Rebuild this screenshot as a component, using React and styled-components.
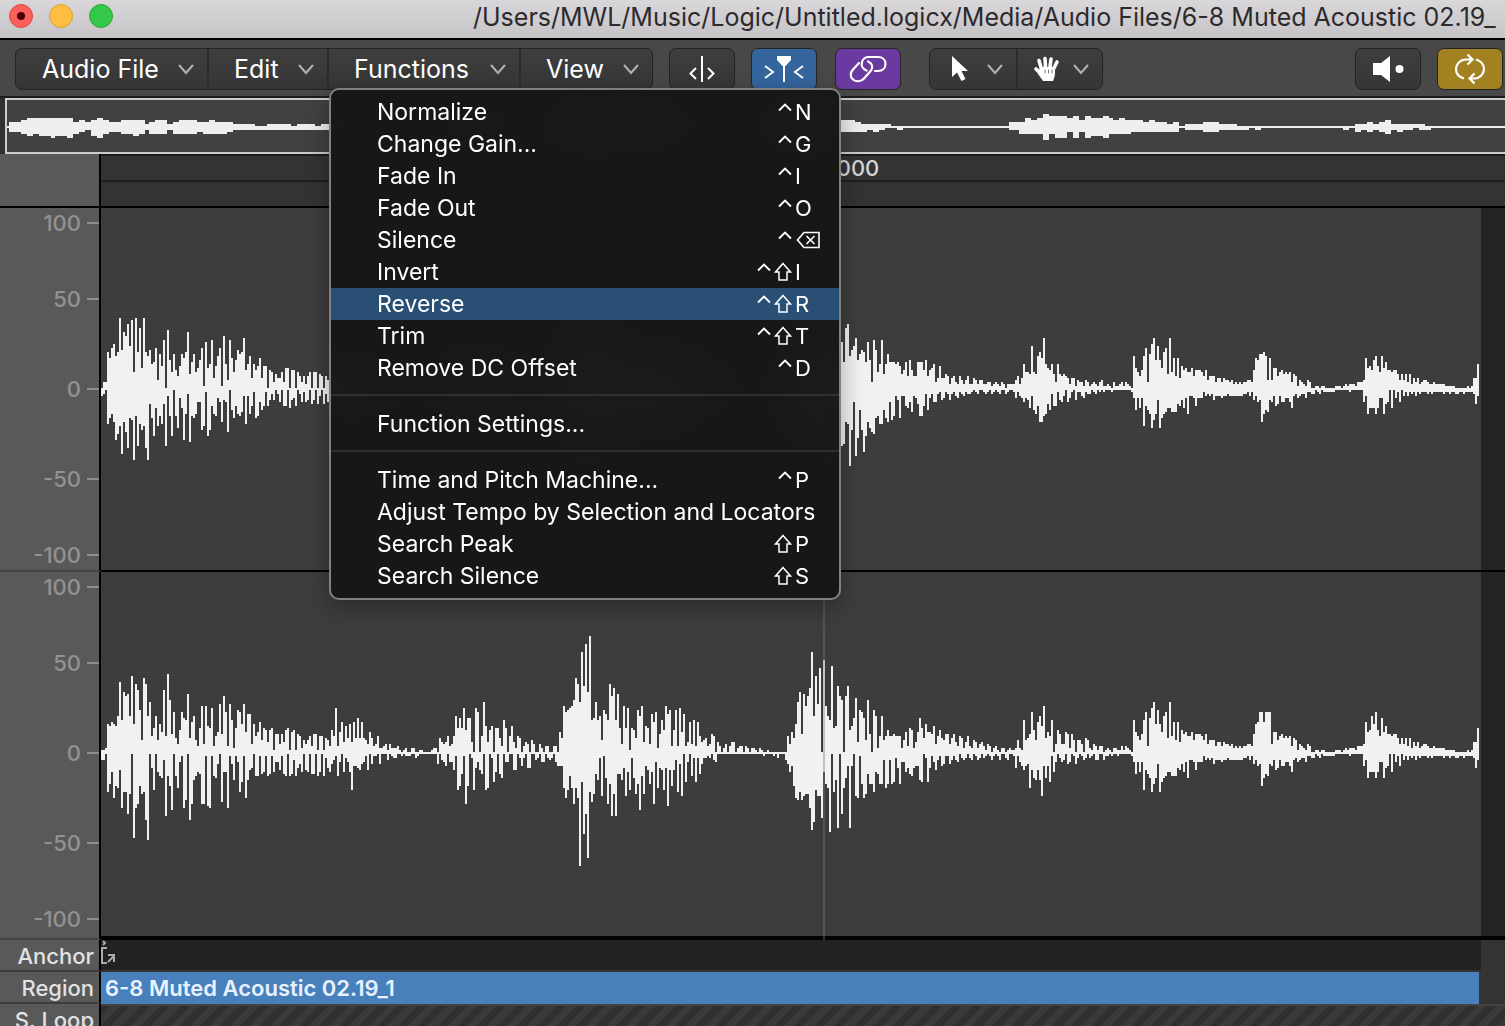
import React from "react"
import styled, { createGlobalStyle, css } from "styled-components"

const GlobalStyle = createGlobalStyle`
    * {
        box-sizing: border-box;
    }
    body {
        margin: 0;
        background: #333;
        font-family: Inter, "Liberation Sans", sans-serif;
    }
    button {
        font-family: inherit;
        border: none;
        margin: 0;
        padding: 0;
        color: inherit;
        background: none;
    }
`

/* peaks are stored in steps of 2px, one entry per 2px column */

const LEFT_UP = [
    0,3,3,18,15,20,22,16,18,35,19,28,26,32,21,34,8,35,18,30,10,35,18,16,19,12,13,20,4,17,
    11,24,0,29,14,8,17,9,6,11,17,15,18,28,7,13,17,8,10,14,20,1,23,10,12,24,5,11,16,20,
    1,26,12,4,24,15,8,14,19,17,18,25,9,12,16,5,12,9,11,15,5,11,11,0,9,8,3,7,5,5,
    8,3,10,10,0,9,9,0,8,6,3,6,2,6,8,0,8,8,0,7,6,0,6,4,6,
]
const LEFT_DOWN = [
    3,2,0,17,14,12,16,25,22,18,32,16,21,29,14,15,35,13,28,17,20,18,29,35,7,14,23,9,18,13,
    17,7,28,3,13,23,0,13,19,4,9,25,12,2,26,13,14,12,6,6,20,18,1,23,20,8,12,13,4,6,
    16,5,6,21,0,10,14,8,12,13,11,3,17,3,12,8,1,14,13,6,10,8,1,8,5,2,5,0,2,6,
    0,8,8,0,9,5,4,8,0,2,6,1,6,5,0,7,5,0,7,3,0,7,2,6,6,
]
const LEFT_TAIL_UP = [
    23,13,30,32,16,19,21,25,14,17,19,18,13,23,14,3,24,19,8,12,24,7,12,17,13,13,13,12,13,11,
    7,9,13,6,14,9,6,6,13,13,13,9,14,6,9,10,12,3,5,11,5,5,7,6,2,5,6,3,2,6,
    4,2,4,6,2,2,5,4,2,4,4,2,2,3,3,1,2,3,2,1,3,2,0,2,2,2,2,4,6,2,
    5,12,8,8,7,21,8,7,16,18,15,25,12,10,9,12,7,3,12,7,6,7,6,5,2,5,5,1,4,3,
    3,1,4,3,1,2,3,2,1,3,4,1,1,2,1,0,3,1,1,2,
]
const LEFT_TAIL_DOWN = [
    28,27,16,17,38,20,6,33,24,10,20,31,23,16,19,21,22,14,13,17,17,10,14,16,6,15,13,3,5,14,
    3,3,8,9,6,11,3,4,7,13,13,8,2,10,4,2,6,6,2,1,5,4,1,2,5,2,1,3,4,1,
    2,3,1,2,2,1,0,1,2,0,0,1,2,1,0,2,1,0,1,2,0,0,2,1,0,0,1,4,1,3,
    4,6,4,5,9,3,10,12,8,16,16,13,12,7,10,2,8,8,1,5,6,3,0,6,4,1,0,5,1,1,
    3,4,1,2,2,0,1,2,0,1,0,1,0,0,0,1,0,0,0,0,
]

const RIGHT_UP = [
    1,1,2,14,13,15,14,13,18,35,16,30,28,29,18,38,14,34,31,21,6,37,34,18,25,8,12,18,6,14,
    10,31,8,39,26,9,20,7,4,11,20,17,16,29,7,15,18,6,3,12,23,4,23,13,12,22,3,8,10,24,
    9,28,20,3,24,16,2,12,21,20,14,24,10,19,19,4,14,8,10,15,6,12,11,5,11,12,1,9,9,4,
    9,5,11,12,1,10,11,1,9,8,2,6,4,6,8,3,9,9,1,8,8,1,7,6,3,11,8,22,3,10,
    15,5,13,7,14,5,15,7,17,7,15,7,6,4,10,7,3,4,8,2,2,3,4,1,4,2,2,2,3,1,
    0,1,2,0,0,2,2,0,0,1,1,0,0,0,0,1,2,2,0,7,5,4,
    5,8,3,4,8,18,12,17,12,22,11,17,17,5,0,22,20,0,8,25,13,5,11,13,0,12,12,7,3,16,
    12,0,8,13,5,2,8,7,0,3,5,4,0,6,4,0,0,4,2,0,3,3,0,0,3,3,0,10,7,23,
    20,21,22,23,26,37,34,25,50,33,54,30,58,16,17,25,16,18,6,21,19,16,34,28,32,16,29,12,4,23,
    12,22,1,12,11,7,21,18,23,5,13,12,4,19,15,20,2,9,16,11,23,19,21,3,11,21,3,22,10,19,
    3,5,15,4,16,3,15,8,5,6,7,3,4,9,8,0,5,3,0,2,4,0,3,5,5,0,2,3,3,0,
    3,2,0,2,2,1,0,2,1,0,0,1,0,0,0,0,0,0,
    0,0,0,8,4,10,7,14,25,30,9,29,23,28,32,50,18,38,24,42,0,46,23,18,16,43,12,13,33,28,
    26,0,28,33,11,13,17,27,5,21,20,17,6,26,9,0,21,18,2,8,18,6,8,11,8,8,9,8,8,8,
    2,6,10,3,12,11,2,5,10,17,12,7,14,10,10,9,13,4,8,11,7,6,9,9,4,7,9,5,3,8,
    7,2,5,8,3,2,6,5,2,4,5,3,1,4,3,0,2,3,1,0,2,2,0,1,2,1,1,2,6,2,
    1,16,6,7,9,20,11,6,15,18,13,23,7,10,8,16,0,4,11,9,4,4,10,9,2,9,6,0,6,6,
    4,0,7,6,2,1,4,3,1,3,3,0,1,2,1,0,2,2,1,1,
]
const RIGHT_DOWN = [
    3,3,0,19,15,9,22,16,17,8,27,19,19,30,20,0,42,27,25,16,20,19,33,43,0,7,18,0,9,11,
    12,3,31,11,16,28,0,11,17,4,1,27,23,0,33,25,13,11,9,10,25,25,1,26,27,1,11,12,5,0,
    24,9,9,27,1,5,13,1,4,19,14,1,22,13,8,7,0,11,11,1,10,9,1,11,10,1,9,4,4,8,
    1,10,11,0,11,10,3,11,7,5,9,0,8,9,0,10,10,0,11,9,0,11,2,7,9,5,3,1,11,4,
    0,9,2,4,9,18,6,6,7,8,5,4,1,8,0,5,1,1,0,5,0,0,0,3,0,1,2,2,0,0,
    1,0,1,1,1,0,0,2,1,0,0,0,0,0,0,0,0,0,5,0,3,4,
    6,0,4,4,8,1,18,16,10,1,25,16,0,2,18,7,4,8,10,0,18,17,0,2,14,9,0,10,12,0,
    4,4,0,0,8,8,0,2,6,2,0,7,7,0,0,3,2,0,4,4,0,2,3,2,0,4,6,6,6,17,
    22,18,11,17,25,17,22,56,14,40,30,52,19,24,20,10,13,2,21,1,12,25,15,31,20,31,10,10,13,7,
    21,9,18,2,12,20,15,28,11,20,6,8,15,9,25,4,17,7,8,18,7,26,8,16,8,3,19,5,21,0,
    14,4,0,11,2,14,2,10,5,2,2,1,2,0,3,4,0,0,0,0,0,0,0,0,0,0,0,0,0,0,
    0,0,0,0,0,0,0,0,0,1,0,0,0,0,1,0,2,0,
    0,0,3,5,9,6,16,22,23,19,23,21,20,20,27,38,34,18,21,21,32,9,15,17,39,0,19,13,37,0,
    30,17,12,6,37,6,0,21,22,1,15,22,20,10,15,15,19,9,10,15,15,3,17,15,3,15,14,2,7,15,
    4,4,9,7,10,11,7,6,6,13,14,0,2,14,7,1,4,8,3,1,6,5,1,1,5,3,1,3,4,0,
    2,3,2,0,2,3,0,1,3,2,0,2,1,0,1,3,1,0,1,3,0,0,2,3,0,0,1,7,1,4,
    6,8,6,5,17,8,12,13,8,13,21,6,12,6,14,1,9,4,0,2,4,3,0,5,4,0,1,5,2,0,
    1,3,2,0,2,1,0,3,3,0,0,3,1,1,0,1,0,0,1,0,
]

// both channels are close to identical from here on
const END_UP = [
    3,1,3,2,1,0,16,10,8,6,9,16,20,3,17,22,25,14,21,14,10,18,20,7,25,8,15,6,15,5,
    11,9,10,8,8,10,6,9,9,9,8,6,9,4,6,6,6,3,5,5,3,5,4,4,3,4,2,3,2,3,
    2,3,3,4,4,3,9,15,14,17,17,18,16,4,15,4,10,10,6,8,9,7,8,7,8,3,7,6,1,4,
    3,2,1,4,3,0,0,1,1,0,1,1,0,0,0,0,0,1,1,1,0,1,2,1,2,2,2,1,3,3,
    3,4,15,10,11,9,14,16,11,8,16,10,13,9,9,8,9,9,7,4,7,4,7,3,7,2,5,3,5,2,
    3,4,4,3,2,2,3,2,2,2,2,2,1,1,1,1,1,0,0,0,0,0,0,1,0,1,5,5,12,
]
const END_DOWN = [
    0,0,0,0,0,1,4,10,4,9,4,18,8,10,12,19,15,12,5,19,14,12,11,9,9,11,11,11,7,8,
    5,9,4,12,3,3,4,8,4,4,4,1,3,2,3,2,5,3,3,3,4,3,3,2,3,3,3,3,3,3,
    3,2,2,1,3,1,5,3,6,5,16,12,10,11,5,6,3,8,7,3,6,6,4,4,6,9,3,2,4,3,
    2,2,4,1,1,2,2,0,1,2,0,1,1,1,1,1,1,0,0,0,0,0,0,0,1,0,0,0,0,0,
    0,6,3,12,9,9,9,12,9,4,4,12,7,6,0,9,0,4,1,6,0,3,1,3,1,2,1,3,1,2,
    1,1,1,2,1,2,1,1,1,1,1,2,1,1,2,1,1,2,2,1,1,2,1,1,1,1,2,7,3,
]

// the two late hits are a little louder on the right
const END_LOUD = { 67: 14, 68: 15, 69: 20, 70: 20, 71: 15, 72: 20, 73: 20, 74: 20, 125: 18, 127: 20, 130: 17 }
const RIGHT_END_UP = END_UP.map((u, i) => END_LOUD[i] || u)

const CHANNELS = [
    {
        name: "Left channel",
        up: [...LEFT_UP, ...RIGHT_UP.slice(115, 370), ...LEFT_TAIL_UP, ...END_UP],
        down: [...LEFT_DOWN, ...RIGHT_DOWN.slice(115, 370), ...LEFT_TAIL_DOWN, ...END_DOWN],
    },
    {
        name: "Right channel",
        up: [...RIGHT_UP, ...RIGHT_END_UP],
        down: [...RIGHT_DOWN, ...END_DOWN],
    },
]

// [x, up, down], each run lasts until the next one
const OVERVIEW = [
    [7,0,0],[9,2,2],[21,3,3],[27,4,4],[33,4,3],[39,4,4],[51,4,5],[55,4,4],[67,4,5],[73,2,3],
    [79,3,2],[85,2,1],[91,3,4],[97,4,5],[103,3,3],[109,2,2],[121,3,3],[133,3,4],[139,3,3],
    [145,1,1],[149,2,3],[155,3,3],[167,1,1],[173,2,3],[179,3,3],[197,2,2],[203,2,3],[209,3,3],
    [215,2,3],[227,2,2],[233,1,1],[255,0,1],[267,1,1],[291,0,1],[297,1,1],[315,0,1],[321,1,1],
    [350,0,0],[450,2,2],[500,0,0],[560,5,5],[620,3,3],[680,0,0],[780,5,5],[820,3,3],[841,3,2],
    [855,2,2],[861,1,2],[867,1,1],[873,1,2],[879,1,1],[885,1,0],[891,0,0],[897,0,1],[903,0,0],
    [1009,2,1],[1019,2,3],[1025,4,3],[1031,3,3],[1037,4,3],[1043,6,6],[1049,5,3],[1055,5,5],
    [1067,4,2],[1073,5,5],[1079,3,2],[1085,5,5],[1091,4,4],[1103,5,5],[1109,4,3],[1113,3,3],
    [1119,4,3],[1125,3,3],[1131,3,2],[1143,2,2],[1149,3,2],[1155,2,2],[1167,1,2],[1173,2,2],
    [1179,0,0],[1185,1,1],[1203,2,2],[1219,1,1],[1237,0,1],[1249,0,0],[1255,0,1],[1261,0,0],
    [1343,0,1],[1349,0,0],[1355,1,2],[1361,1,1],[1367,2,2],[1373,1,1],[1379,2,2],[1385,3,3],
    [1391,1,1],[1397,1,2],[1403,1,1],[1413,1,0],[1419,1,1],[1425,0,1],[1431,0,0],[1505,0,0],
]

const MENU = [
    [
        { label: "Normalize", mods: ["control"], letter: "N" },
        { label: "Change Gain...", mods: ["control"], letter: "G" },
        { label: "Fade In", mods: ["control"], letter: "I" },
        { label: "Fade Out", mods: ["control"], letter: "O" },
        { label: "Silence", mods: ["control"], letter: "delete" },
        { label: "Invert", mods: ["control", "shift"], letter: "I" },
        { label: "Reverse", mods: ["control", "shift"], letter: "R", active: true },
        { label: "Trim", mods: ["control", "shift"], letter: "T" },
        { label: "Remove DC Offset", mods: ["control"], letter: "D" },
    ],
    [{ label: "Function Settings..." }],
    [
        { label: "Time and Pitch Machine...", mods: ["control"], letter: "P" },
        { label: "Adjust Tempo by Selection and Locators" },
        { label: "Search Peak", mods: ["shift"], letter: "P" },
        { label: "Search Silence", mods: ["shift"], letter: "S" },
    ],
]

const Window = styled.div`
    height: 100vh;
    overflow: hidden;
    display: flex;
    flex-direction: column;
`

const TitleBar = styled.header`
    flex: none;
    height: 40px;
    display: flex;
    align-items: flex-start;
    padding: 4px 0 0 9px;
    gap: 16px;
    background: linear-gradient(#dad7da, #c6c3c6);
    border-bottom: 2px solid #000;
    overflow: hidden;
`
const Light = styled.button`
    flex: none;
    width: 24px;
    height: 24px;
    border-radius: 50%;
    background: ${p => p.$color};
    border: 1px solid ${p => p.$edge};
    display: flex;
    align-items: center;
    justify-content: center;
`
const Dot = styled.span`
    width: 8px;
    height: 8px;
    border-radius: 50%;
    background: #4a0002;
`
const Title = styled.h1`
    margin: 0 0 0 344px;
    font-size: 25px;
    line-height: 26px;
    font-weight: 400;
    color: #2c2a2d;
    white-space: nowrap;
`

const Toolbar = styled.div`
    flex: none;
    height: 58px;
    display: flex;
    align-items: flex-start;
    gap: 16px;
    padding: 8px 2px 0 15px;
    background: #484848;
    border-bottom: 2px solid #1c1c1c;
`
const box = css`
    height: 42px;
    border: 1px solid #232323;
    border-radius: 7px;
    background: linear-gradient(#3e3e3e, #363636);
    color: #fff;
`
const Group = styled.nav`
    ${box}
    display: flex;
    margin-left: ${p => p.$indent || 0}px;
`
const Slot = styled.div`
    position: relative;
    display: flex;
    & + & {
        border-left: 2px solid #2c2c2c;
    }
`
const DropButton = styled.button`
    width: ${p => p.$width}px;
    display: flex;
    align-items: center;
    justify-content: space-between;
    padding: 0 13px 0 ${p => p.$pad || 25}px;
    font-size: 25px;
    line-height: 32px;
    white-space: nowrap;
`
const Tool = styled.button`
    ${box}
    width: 66px;
    display: flex;
    align-items: center;
    justify-content: center;
    ${p => p.$fill && `background: ${p.$fill};`}
    ${p => p.$indent && `margin-left: ${p.$indent}px;`}
    ${p => p.$push && "margin-left: auto;"}
`

const Menu = styled.div`
    position: absolute;
    z-index: 2;
    top: 39px;
    left: 0;
    width: 512px;
    padding: 6px 0;
    background: rgba(22, 22, 22, 0.98);
    backdrop-filter: blur(20px);
    border: 2px solid #808080;
    border-radius: 10px;
    box-shadow: 0 8px 24px rgba(0, 0, 0, 0.3);
`
const MenuItem = styled.button`
    width: 100%;
    height: 32px;
    display: flex;
    align-items: center;
    padding-left: 46px;
    font-size: 23px;
    line-height: 32px;
    color: #fff;
    white-space: nowrap;
    background: ${p => (p.$active ? "#294f75" : "none")};
`
const Keys = styled.span`
    margin-left: auto;
    display: flex;
    align-items: center;
    gap: 3px;
`
const Key = styled.span`
    width: 44px;
    display: flex;
    align-items: center;
    font-size: 22px;
`
const Separator = styled.hr`
    height: 2px;
    margin: 10px 0 12px;
    border: none;
    background: #303030;
`

const Overview = styled.div`
    flex: none;
    height: 56px;
    margin-left: 5px;
    border: 2px solid #ccc;
    border-right: none;
    background: #414141;
`
const OverviewStrip = styled.div`
    background: #303030;
`

const Row = styled.div`
    flex: none;
    display: grid;
    grid-template-columns: 101px 1fr;
`
const Gutter = styled.div`
    background: #595959;
    border-right: 2px solid #000;
`
const Ruler = styled.div`
    border-top: 2px solid #1c1c1c;
    background: #333;
`
const RulerLine = styled.div`
    height: 26px;
    padding-left: 51%;
    border-bottom: 2px solid #1e1e1e;
    font-size: 22px;
    line-height: 24px;
    font-weight: 500;
    color: #d6d6d6;
`
const RulerGap = styled.div`
    height: 24px;
`
const RulerRow = styled(Row)`
    border-bottom: 2px solid #000;
`

const Tracks = styled.main`
    position: relative;
    flex: none;
`
const TrackRow = styled(Row)`
    height: ${p => p.$height}px;
`
const Scale = styled(Gutter)`
    display: grid;
    grid-template-rows: 30px 122px 58px 122px 30px;
    align-items: center;
    border-bottom: 2px solid #444;
`
const Mark = styled.div`
    display: flex;
    align-items: center;
    justify-content: flex-end;
    gap: 6px;
    font-size: 22px;
    line-height: 24px;
    font-weight: 500;
    color: #929292;
    &::after {
        content: "";
        width: 12px;
        height: 2px;
        background: #8e8e8e;
    }
`
const Lane = styled.div`
    background: #232323;
    border-bottom: ${p => p.$line}px solid #000;
    padding-right: 24px;
`
const Clip = styled.div`
    height: 100%;
    padding-right: 2px;
    background: #3d3d3d;
`
const WaveSvg = styled.svg`
    display: block;
    width: 100%;
    height: ${p => p.$height}px;
`
const Playhead = styled.div`
    position: absolute;
    top: 0;
    bottom: 0;
    left: calc(101px + (100% - 101px) * 0.5145);
    width: 2px;
    background: rgba(120, 120, 120, 0.4);
`

const Label = styled(Gutter)`
    height: 32px;
    padding-right: 5px;
    border-bottom: 2px solid #3c3c3c;
    text-align: right;
    font-size: 22px;
    line-height: 32px;
    font-weight: 500;
    color: #e2e2e2;
    white-space: nowrap;
`
const Band = styled.div`
    height: 32px;
    display: flex;
    padding-right: ${p => p.$rest}px;
    background: #333;
    border-bottom: ${p => (p.$line ? "2px solid #343434" : "none")};
`
const AnchorBand = styled.div`
    width: 100%;
    background: #222;
`
const RegionBand = styled.div`
    width: 100%;
    padding-left: 4px;
    background: #4780bb;
    color: #e8f2ff;
    font-size: 22px;
    line-height: 32px;
    font-weight: 600;
    white-space: nowrap;
`
const LoopBand = styled.div`
    border-top: 2px solid #424242;
    background: repeating-linear-gradient(135deg, #303030 0 7px, #3a3a3a 7px 14px);
`

const Chevron = () => (
    <svg width="16" height="12" viewBox="0 0 16 12" fill="none" stroke="#b4b4b4" strokeWidth="2">
        <path d="M1 2l7 8 7-8" />
    </svg>
)

const ControlIcon = () => (
    <svg width="14" height="22" viewBox="0 0 14 22" fill="none" stroke="#fff" strokeWidth="1.800">
        <path d="M1 9.500l6-6 6 6" />
    </svg>
)
const ShiftIcon = () => (
    <svg width="18" height="20" viewBox="0 0 18 20" fill="none" stroke="#fff" strokeWidth="1.500">
        <path d="M9 1.500L16.500 10H13v8H5v-8H1.500z" />
    </svg>
)
const DeleteIcon = () => (
    <svg width="26" height="18" viewBox="0 0 26 18" fill="none" stroke="#fff" strokeWidth="1.600">
        <path d="M9 1.500h15v15H9L2.500 9zM11.500 5l8 8M19.500 5l-8 8" />
    </svg>
)

const SplitIcon = () => (
    <svg width="28" height="28" viewBox="0 0 28 28" fill="none" stroke="#fff" strokeWidth="2">
        <path d="M14 1v26" />
        <path d="M8 13l-5.500 5.500L8 24M20 13l5.500 5.500L20 24" />
    </svg>
)
const CatchIcon = () => (
    <svg width="42" height="28" viewBox="0 0 42 28" fill="none" stroke="#fff" strokeWidth="2">
        <path d="M21 8v19M2 11l8 6-8 6M40 11l-8 6 8 6" />
        <path d="M14 1h14v4l-5.500 6h-3L14 5z" fill="#fff" stroke="none" />
    </svg>
)
const LinkIcon = () => (
    <svg width="38" height="28" viewBox="0 0 38 28" fill="none" stroke="#fff" strokeWidth="2.200" strokeLinecap="round">
        <path d="M17.500 15.500c-4-1.500-5.500-5-4.500-8.500C14 3.500 17 2 20 2h9c4.500 0 7.500 3 7.500 7s-3 7-7.500 7h-3" />
        <path d="M19 6.500c4 1.500 5.500 5.500 3 9l-7 8c-3 3.500-8 3.500-11 1s-3-7 0-10l6-6.500" />
    </svg>
)
const PointerIcon = () => (
    <svg width="20" height="28" viewBox="0 0 20 28" fill="#fff">
        <path d="M2 1v21l5-4.500 4.500 8.500 4-2L11.500 16H18z" />
    </svg>
)
const HandIcon = () => (
    <svg width="28" height="28" viewBox="0 0 28 28" fill="none" stroke="#fff" strokeLinecap="round">
        <path d="M8.500 14L6 5.500M12.500 12L12 3.500M17 12l1-8M20.500 14l3.500-7" strokeWidth="3.600" />
        <path d="M8 19l-5-5" strokeWidth="3.600" />
        <path d="M7 12h15v6c0 3-1 5-2 8H10c-1-2-3-4-5-7z" fill="#fff" stroke="none" />
        <path d="M12 15v3M15.500 15v3M19 15v3" stroke="#777" strokeWidth="1" />
    </svg>
)
const SpeakerIcon = () => (
    <svg width="32" height="28" viewBox="0 0 32 28" fill="#fff">
        <path d="M1 8h8l9-7v26l-9-7H1z" />
        <circle cx="27.500" cy="14" r="4" />
    </svg>
)
const CycleIcon = () => (
    <svg width="34" height="32" viewBox="0 0 34 32" fill="none" stroke="#fff" strokeWidth="2.200">
        <path d="M11 25.500C6 24 3 20.500 3 16s4-9.500 10-9.500h6M14.500 1.500l5 5-5 5" />
        <path d="M23 6.500c5 1.500 8 5 8 9.500s-4 9.500-10 9.500h-4M21.500 20.500l-5 5 5 5" />
    </svg>
)
const AnchorMark = () => (
    <svg width="16" height="26" viewBox="0 0 16 26" fill="none" stroke="#aaa" strokeWidth="2">
        <path d="M1 7v16h5M1 8h5M2 1l2 2-2 2M7 22l6-6M7 15h6v7" />
    </svg>
)

const ICONS = { control: ControlIcon, shift: ShiftIcon }

const wavePath = ({ up, down }) =>
    up.map((u, i) => `M${i} ${90 - u}h1v${u + 1 + down[i]}h-1z`).join("")

const overviewPath = OVERVIEW.slice(0, -1)
    .map(([x, u, d], i) => {
        const w = OVERVIEW[i + 1][0] - x
        return `M${x} ${26 - u * 2}h${w}v${(u + d + 1) * 2}h${-w}z`
    })
    .join("")

const FunctionsMenu = () => (
    <Menu role="menu" aria-label="Functions">
        {MENU.map((section, i) => (
            <React.Fragment key={i}>
                {i > 0 && <Separator />}
                {section.map(({ label, mods = [], letter, active }) => (
                    <MenuItem key={label} role="menuitem" $active={active}>
                        {label}
                        {letter && (
                            <Keys>
                                {mods.map(mod => {
                                    const ModIcon = ICONS[mod]
                                    return <ModIcon key={mod} />
                                })}
                                <Key>{letter === "delete" ? <DeleteIcon /> : letter}</Key>
                            </Keys>
                        )}
                    </MenuItem>
                ))}
            </React.Fragment>
        ))}
    </Menu>
)

const App = () => (
    <Window>
        <GlobalStyle />
        <TitleBar>
            <Light $color="#fc605b" $edge="#df4744" aria-label="Close"><Dot /></Light>
            <Light $color="#fdbe41" $edge="#dea034" aria-label="Minimize" />
            <Light $color="#34c84a" $edge="#27a934" aria-label="Zoom" />
            <Title>/Users/MWL/Music/Logic/Untitled.logicx/Media/Audio Files/6-8 Muted Acoustic 02.19_</Title>
        </TitleBar>

        <Toolbar>
            <Group>
                <Slot><DropButton $width={191} $pad={26}>Audio File <Chevron /></DropButton></Slot>
                <Slot><DropButton $width={118}>Edit <Chevron /></DropButton></Slot>
                <Slot>
                    <DropButton $width={190} aria-haspopup="menu" aria-expanded="true">Functions <Chevron /></DropButton>
                    <FunctionsMenu />
                </Slot>
                <Slot><DropButton $width={131}>View <Chevron /></DropButton></Slot>
            </Group>
            <Tool aria-label="Split"><SplitIcon /></Tool>
            <Tool aria-label="Catch" $fill="#34659d"><CatchIcon /></Tool>
            <Tool aria-label="Link" $fill="#6b3aa0" $indent={2}><LinkIcon /></Tool>
            <Group $indent={12}>
                <Slot><DropButton $width={86} $pad={20} aria-label="Pointer tool"><PointerIcon /><Chevron /></DropButton></Slot>
                <Slot><DropButton $width={84} $pad={15} aria-label="Hand tool"><HandIcon /><Chevron /></DropButton></Slot>
            </Group>
            <Tool aria-label="Prelisten" $push><SpeakerIcon /></Tool>
            <Tool aria-label="Cycle" $fill="#a28120"><CycleIcon /></Tool>
        </Toolbar>

        <OverviewStrip>
            <Overview>
                <WaveSvg $height={52} viewBox="7 0 1498 52" preserveAspectRatio="none" shapeRendering="crispEdges">
                    <path d={overviewPath} fill="#eee" />
                </WaveSvg>
            </Overview>
        </OverviewStrip>

        <RulerRow>
            <Gutter />
            <Ruler>
                <RulerLine>0,000</RulerLine>
                <RulerGap />
            </Ruler>
        </RulerRow>

        <Tracks>
            {CHANNELS.map((channel, i) => (
                <TrackRow key={channel.name} $height={i ? 368 : 364}>
                    <Scale>
                        {[100, 50, 0, -50, -100].map(n => <Mark key={n}>{n}</Mark>)}
                    </Scale>
                    <Lane $line={i ? 4 : 2}>
                        <Clip>
                            <WaveSvg
                                $height={362}
                                viewBox="0 0 689 181"
                                preserveAspectRatio="none"
                                shapeRendering="crispEdges"
                                role="img"
                                aria-label={channel.name}
                            >
                                <path d={wavePath(channel)} fill="#f1f1f1" />
                            </WaveSvg>
                        </Clip>
                    </Lane>
                </TrackRow>
            ))}
            <Playhead />
        </Tracks>

        <Row>
            <Label>Anchor</Label>
            <Band $rest={24} $line>
                <AnchorBand><AnchorMark /></AnchorBand>
            </Band>
        </Row>
        <Row>
            <Label>Region</Label>
            <Band $rest={26}>
                <RegionBand>6-8 Muted Acoustic 02.19_1</RegionBand>
            </Band>
        </Row>
        <Row>
            <Label>S. Loop</Label>
            <LoopBand />
        </Row>
    </Window>
)

export default App
